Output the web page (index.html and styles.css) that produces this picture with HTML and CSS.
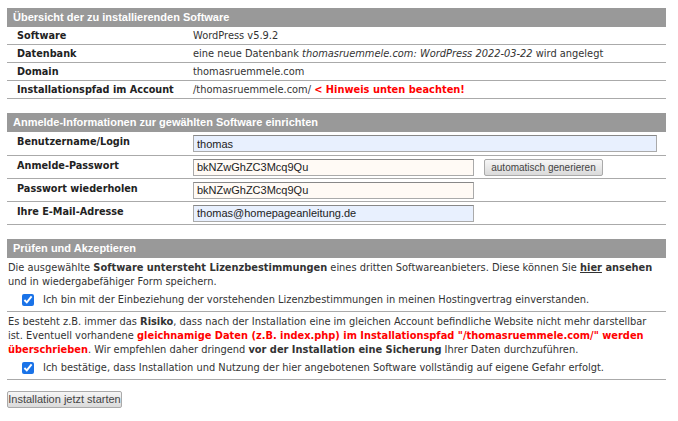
FILE: index.html
```html
<!DOCTYPE html>
<html>
<head>
<meta charset="utf-8">
<link rel="stylesheet" href="styles.css">
</head>
<body>

<table class="box">
  <colgroup><col class="c1"><col></colgroup>
  <tr><th colspan="2">Übersicht der zu installierenden Software</th></tr>
  <tr><td class="lbl">Software</td><td>WordPress v5.9.2</td></tr>
  <tr><td class="lbl">Datenbank</td><td>eine neue Datenbank <i>thomasruemmele.com: WordPress 2022-03-22</i> wird angelegt</td></tr>
  <tr><td class="lbl">Domain</td><td>thomasruemmele.com</td></tr>
  <tr><td class="lbl">Installationspfad im Account</td><td>/thomasruemmele.com/ <b class="red">&lt; Hinweis unten beachten!</b></td></tr>
</table>

<table class="box form">
  <colgroup><col class="c1"><col></colgroup>
  <tr><th colspan="2">Anmelde-Informationen zur gewählten Software einrichten</th></tr>
  <tr>
    <td class="lbl">Benutzername/Login</td>
    <td><input class="field wide auto" type="text" value="thomas"></td>
  </tr>
  <tr>
    <td class="lbl">Anmelde-Passwort</td>
    <td><input class="field pw" type="text" value="bkNZwGhZC3Mcq9Qu"><button class="btn small">automatisch generieren</button></td>
  </tr>
  <tr>
    <td class="lbl">Passwort wiederholen</td>
    <td><input class="field pw" type="text" value="bkNZwGhZC3Mcq9Qu"></td>
  </tr>
  <tr>
    <td class="lbl">Ihre E-Mail-Adresse</td>
    <td><input class="field pw auto" type="text" value="thomas@homepageanleitung.de"></td>
  </tr>
</table>

<div class="box accept">
  <div class="head">Prüfen und Akzeptieren</div>
  <div class="block">
    <p>Die ausgewählte <b>Software untersteht Lizenzbestimmungen</b> eines dritten Softwareanbieters. Diese können Sie <b><u>hier</u> ansehen</b><br>und in wiedergabefähiger Form speichern.</p>
    <label class="check"><input type="checkbox" checked> Ich bin mit der Einbeziehung der vorstehenden Lizenzbestimmungen in meinen Hostingvertrag einverstanden.</label>
  </div>
  <div class="block">
    <p>Es besteht z.B. immer das <b>Risiko</b>, dass nach der Installation eine im gleichen Account befindliche Website nicht mehr darstellbar<br>ist. Eventuell vorhandene <b class="red">gleichnamige Daten (z.B. index.php) im Installationspfad "/thomasruemmele.com/" werden<br>überschrieben</b>. Wir empfehlen daher dringend <b>vor der Installation eine Sicherung</b> Ihrer Daten durchzuführen.</p>
    <label class="check"><input type="checkbox" checked> Ich bestätige, dass Installation und Nutzung der hier angebotenen Software vollständig auf eigene Gefahr erfolgt.</label>
  </div>
</div>

<button class="btn start">Installation jetzt starten</button>

</body>
</html>
```

FILE: styles.css
```css
body {
  margin: 8px 7px;
  background: #fff;
  font-family: "DejaVu Sans", Verdana, sans-serif;
  font-size: 9.85px;
  color: #333;
}
.box {
  width: 659px;
  border-collapse: collapse;
  border-spacing: 0;
  table-layout: fixed;
}
.box col.c1 {
  width: 186px;
}
.box th,
.box .head {
  background: #999;
  color: #fff;
  font-family: "Liberation Sans", Arial, sans-serif;
  font-size: 11px;
  font-weight: bold;
  text-align: left;
  height: 19px;
  line-height: 19px;
  padding: 0 0 0 6px;
  box-sizing: border-box;
}
.box td {
  height: 17px;
  padding: 0 0 0 10px;
  border-bottom: 1px solid #aaa;
  vertical-align: middle;
  white-space: nowrap;
}
.box td.lbl {
  font-weight: bold;
  font-size: 9.7px;
  color: #222;
}
.box td + td {
  padding-left: 0;
}
.red {
  color: #f00;
}

.form {
  margin-top: 14px;
}
.form td {
  height: 23px;
  vertical-align: top;
  padding-top: 3px;
  box-sizing: border-box;
  line-height: 14px;
}
.field {
  box-sizing: border-box;
  height: 17px;
  margin: 0;
  padding: 0 3px;
  border: 1px solid #aaa;
  border-top-color: #888;
  font-family: "Liberation Sans", Arial, sans-serif;
  font-size: 11px;
  color: #222;
  background: #fffaf5;
  vertical-align: top;
}
.field.auto {
  background: #e8f0fe;
}
.field.wide {
  width: 464px;
}
.field.pw {
  width: 281px;
}
.btn {
  font-family: "Liberation Sans", Arial, sans-serif;
  color: #444;
  border: 1px solid #aaa;
  border-radius: 2px;
  background: linear-gradient(#f6f6f6, #dadada);
  padding: 0;
  height: 17px;
  box-sizing: border-box;
}
.btn.small {
  font-size: 10px;
  margin-left: 10px;
  width: 119px;
  vertical-align: top;
}

.accept {
  margin-top: 14px;
}
.accept .head {
  width: 100%;
}
.block {
  border-bottom: 1px solid #aaa;
  padding: 3px 0 4px 1px;
}
.block p {
  margin: 0;
  line-height: 14px;
}
.check {
  display: flex;
  align-items: center;
  margin-top: 4px;
  line-height: 14px;
  padding-left: 14px;
}
.check input {
  width: 12px;
  height: 12px;
  margin: 0 9px 0 0;
  accent-color: #1a73e8;
}
.start {
  margin-top: 11px;
  font-size: 11px;
  width: 115px;
}
```
